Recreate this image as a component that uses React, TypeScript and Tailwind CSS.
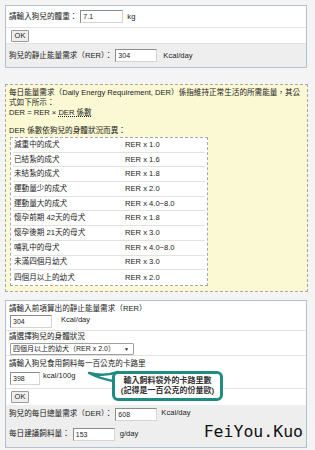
import React from "react";

const FONT = { fontFamily: '"Liberation Sans", "Noto Sans CJK TC", sans-serif' };

function Box({ value, w }: { value: string; w: string }) {
  return (
    <span
      className={`inline-flex h-[13px] items-center border border-t-[#8c8c8c] border-l-[#8c8c8c] border-r-[#d4d4d4] border-b-[#d4d4d4] bg-white pl-[2px] text-[7px] leading-none ${w}`}
    >
      {value}
    </span>
  );
}

function OkButton() {
  return (
    <span className="inline-flex h-[12px] w-[18px] items-center justify-center rounded-[1px] border border-[#9a9a9a] bg-[#eeeeee] text-[7.5px] leading-none">
      OK
    </span>
  );
}

const rows: [string, string][] = [
  ["減重中的成犬", "RER x 1.0"],
  ["已結紮的成犬", "RER x 1.6"],
  ["未結紮的成犬", "RER x 1.8"],
  ["運動量少的成犬", "RER x 2.0"],
  ["運動量大的成犬", "RER x 4.0~8.0"],
  ["懷孕前期 42天的母犬", "RER x 1.8"],
  ["懷孕後期 21天的母犬", "RER x 3.0"],
  ["哺乳中的母犬", "RER x 4.0~8.0"],
  ["未滿四個月幼犬", "RER x 3.0"],
  ["四個月以上的幼犬", "RER x 2.0"],
];

export default function App() {
  return (
    <div
      className="h-[450px] w-[315px] overflow-hidden bg-[#f4f4f4] px-[5px] pt-[5px] text-[7.6px] leading-[10px] text-[#222]"
      style={FONT}
    >
      {/* 體重 / RER */}
      <div className="w-[302px] border border-[#b4c0cf] bg-white">
        <div className="flex h-[22px] items-center gap-[3px] border-b border-[#e4e4e4] pl-[3px]">
          <span>請輸入狗兒的體重：</span>
          <Box value="7.1" w="w-[43px]" />
          <span className="ml-[1px]">kg</span>
        </div>
        <div className="flex h-[16px] items-center border-b border-[#e0e0e0] pl-[5px]">
          <OkButton />
        </div>
        <div className="flex h-[23px] items-center gap-[3px] bg-[#eeeeee] pl-[3px]">
          <span>狗兒的靜止能量需求（RER）：</span>
          <Box value="304" w="w-[42px]" />
          <span className="ml-[3px]">Kcal/day</span>
        </div>
      </div>

      {/* DER 說明 */}
      <div className="mt-[16px] w-[303px] border border-dashed border-[#a8a8a8] bg-[#fbf9d4] pb-[5px] pl-[3px] pr-[2px] pt-[3px]">
        <p>
          每日能量需求（Daily Energy Requirement, DER）係指維持正常生活的所需能量，其公式如下所示：
        </p>
        <p>
          DER = RER × <span className="underline decoration-dotted underline-offset-[1px]">DER 係數</span>
        </p>
        <p className="mt-[8px]">DER 係數依狗兒的身體狀況而異：</p>
        <div className="ml-[1px] mt-[1px] w-[198px] border border-dashed border-[#a8a8a8] bg-white px-[2px]">
          {rows.map(([a, b], i) => (
            <div
              key={a}
              className={`flex h-[14.7px] items-center ${i < rows.length - 1 ? "border-b border-[#e2e2e2]" : ""}`}
            >
              <span className="w-[112px] pl-[1px]">{a}</span>
              <span>{b}</span>
            </div>
          ))}
        </div>
      </div>

      {/* DER 計算 */}
      <div className="relative mt-[8px] w-[302px] border border-[#b4c0cf] bg-white">
        <div className="h-[30px] border-b border-[#e2e2e2] pl-[3px] pt-[3px]">
          <p>請輸入前項算出的靜止能量需求（RER）</p>
          <div className="mt-[1px] flex items-center gap-[9px] pl-[1px]">
            <Box value="304" w="w-[42px]" />
            <span className="-mt-[3px]">Kcal/day</span>
          </div>
        </div>
        <div className="h-[25px] border-b border-[#e2e2e2] pl-[3px] pt-[1px]">
          <p>請選擇狗兒的身體狀況</p>
          <div className="ml-[1px] mt-[1px] flex h-[12px] w-[124px] items-center justify-between rounded-[1px] border border-[#a0a0a0] bg-white pl-[2px] pr-[4px] text-[7px]">
            <span>四個月以上的幼犬（RER x 2.0）</span>
            <span className="text-[5px]">▼</span>
          </div>
        </div>
        <div className="h-[33px] border-b border-[#e2e2e2] pl-[3px] pt-[3px]">
          <p>請輸入狗兒食用飼料每一百公克的卡路里</p>
          <div className="mt-[3px] flex items-center gap-[3px] pl-[1px]">
            <Box value="398" w="w-[30px]" />
            <span className="-mt-[4px]">kcal/100g</span>
          </div>
        </div>
        <div className="flex h-[16px] items-center pl-[5px]">
          <OkButton />
        </div>
        <div className="h-[42px] bg-[#eeeeee] pl-[3px] pt-[2px]">
          <div className="flex h-[15px] items-center gap-[3px]">
            <span>狗兒的每日總量需求（DER）：</span>
            <Box value="608" w="w-[42px]" />
            <span className="-mt-[3px] ml-[1px]">Kcal/day</span>
          </div>
          <div className="mt-[5px] flex h-[15px] items-center gap-[3px]">
            <span>每日建議飼料量：</span>
            <Box value="153" w="w-[42px]" />
            <span className="ml-[2px]">g/day</span>
            <span
              className="ml-auto mr-[3px] -mt-[4px] text-[16.5px] leading-none tracking-[0px] text-[#111]"
              style={{ fontFamily: '"DejaVu Sans Mono", monospace' }}
            >
              FeiYou.Kuo
            </span>
          </div>
        </div>

        {/* 說明氣泡 */}
        <svg
          className="absolute left-[80px] top-[68px]"
          width="34"
          height="16"
          viewBox="0 0 34 16"
        >
          <path d="M32 3 Q 18 8 3 4 Q 14 10 32 13 Z" fill="white" stroke="#1f8c84" strokeWidth="2.5" strokeLinejoin="round" />
        </svg>
        <div className="absolute left-[106px] top-[70px] flex h-[30px] w-[111px] flex-col items-center justify-center rounded-[6px] border-[3px] border-[#1f8c84] bg-white text-[8px] font-bold leading-[10px] text-[#333]">
          <span>輸入飼料袋外的卡路里數</span>
          <span>(記得是一百公克的份量歐)</span>
        </div>
      </div>
    </div>
  );
}
